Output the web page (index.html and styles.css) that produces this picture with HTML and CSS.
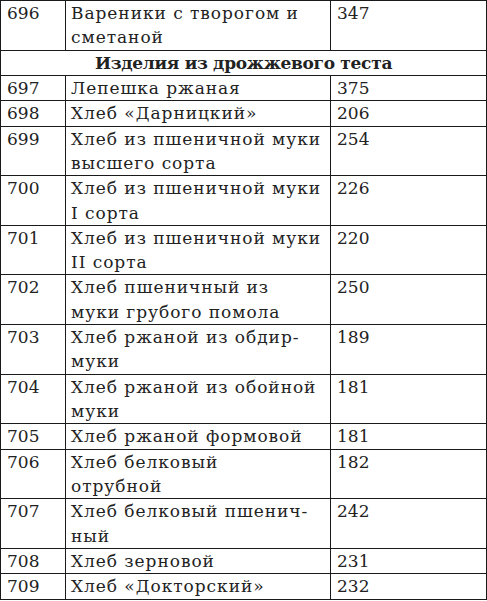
FILE: index.html
```html
<!DOCTYPE html>
<html lang="ru">
<head>
<meta charset="utf-8">
<link rel="stylesheet" href="styles.css">
</head>
<body>
<table class="tbl">
  <colgroup><col class="c-num"><col class="c-name"><col class="c-val"></colgroup>
  <tr><td>696</td><td class="name">Вареники с творогом и<br>сметаной</td><td>347</td></tr>
  <tr><td colspan="3" class="head">Изделия из дрожжевого теста</td></tr>
  <tr><td>697</td><td class="name">Лепешка ржаная</td><td>375</td></tr>
  <tr><td>698</td><td class="name">Хлеб «Дарницкий»</td><td>206</td></tr>
  <tr><td>699</td><td class="name">Хлеб из пшеничной муки<br>высшего сорта</td><td>254</td></tr>
  <tr><td>700</td><td class="name">Хлеб из пшеничной муки<br>I сорта</td><td>226</td></tr>
  <tr><td>701</td><td class="name">Хлеб из пшеничной муки<br>II сорта</td><td>220</td></tr>
  <tr><td>702</td><td class="name">Хлеб пшеничный из<br>муки грубого помола</td><td>250</td></tr>
  <tr><td>703</td><td class="name">Хлеб ржаной из обдир-<br>муки</td><td>189</td></tr>
  <tr><td>704</td><td class="name">Хлеб ржаной из обойной<br>муки</td><td>181</td></tr>
  <tr><td>705</td><td class="name">Хлеб ржаной формовой</td><td>181</td></tr>
  <tr><td>706</td><td class="name">Хлеб белковый<br>отрубной</td><td>182</td></tr>
  <tr><td>707</td><td class="name">Хлеб белковый пшенич-<br>ный</td><td>242</td></tr>
  <tr><td>708</td><td class="name">Хлеб зерновой</td><td>231</td></tr>
  <tr><td>709</td><td class="name">Хлеб «Докторский»</td><td>232</td></tr>
</table>
</body>
</html>
```

FILE: styles.css
```css
html, body {
  margin: 0;
  padding: 0;
  background: #ffffff;
}
.tbl {
  border-collapse: collapse;
  width: 486px;
  table-layout: fixed;
  font-family: "DejaVu Serif", "Liberation Serif", serif;
  font-size: 17px;
  line-height: 24.32px;
  color: #222222;
}
.c-num { width: 65px; }
.c-name { width: 265px; }
.c-val { width: 156px; }
.tbl td {
  border: 1px solid #1a1a1a;
  padding: 0 0 0 6px;
  vertical-align: top;
  white-space: nowrap;
}
.tbl td.name {
  letter-spacing: 0.95px;
  padding-left: 5px;
}
.tbl td:last-child {
  padding-left: 6px;
}
.tbl td.head {
  text-align: center;
  font-weight: bold;
  padding-left: 0;
  letter-spacing: -0.3px;
}
```
